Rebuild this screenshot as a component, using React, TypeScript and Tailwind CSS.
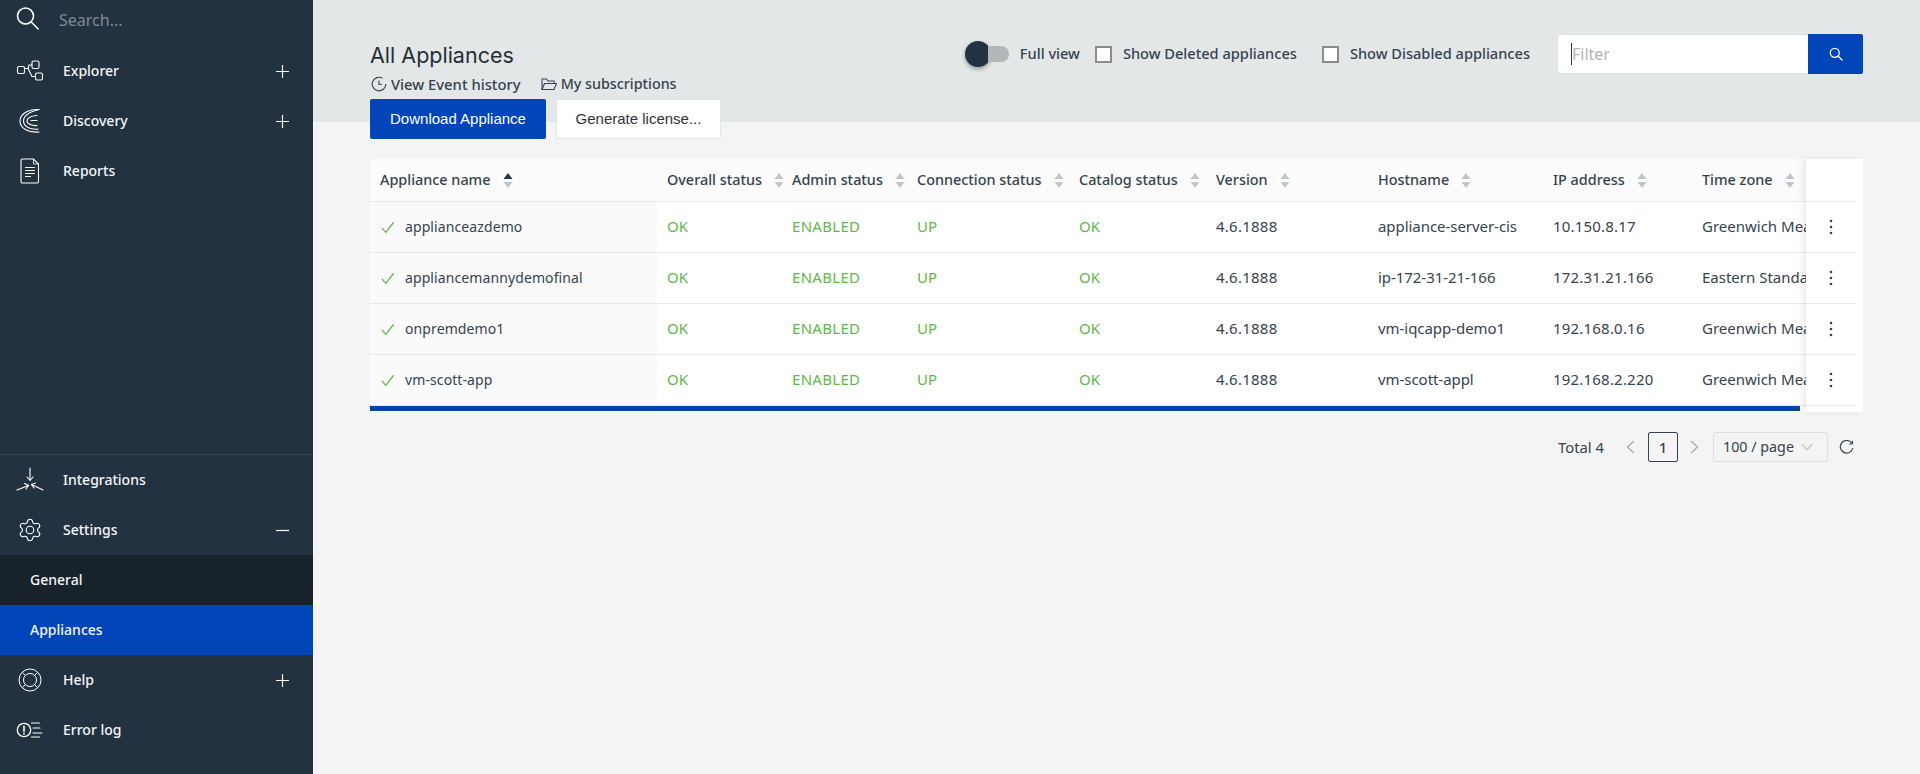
import React from "react";

const font = { fontFamily: '"Noto Sans", "Open Sans", sans-serif' };

function SearchI() {
  return (
    <svg width="26" height="26" viewBox="0 0 26 26" fill="none" stroke="#fff" strokeWidth="1.6" strokeLinecap="round">
      <circle cx="11.5" cy="11" r="8" />
      <path d="M17.2 17l7 7" />
    </svg>
  );
}
function ExplorerI() {
  return (
    <svg width="28" height="22" viewBox="0 0 28 22" fill="none" stroke="#fff" strokeWidth="1.1">
      <rect x="1.5" y="6.5" width="7" height="7" rx="1.5" />
      <rect x="16" y="1" width="7" height="7.5" rx="1.5" />
      <rect x="19.5" y="13" width="7" height="7" rx="1.5" />
      <path d="M8.5 8.5L12 8.5 L13 5 L16 5" />
      <path d="M12 8.5L16 16.5 L19.5 16.5" />
    </svg>
  );
}
function DiscoveryI() {
  return (
    <svg width="24" height="26" viewBox="0 0 24 26" fill="none" stroke="#fff" strokeWidth="1.1" strokeLinecap="round">
      <path d="M21 1.500C10 1 2 6 2 13c0 7 8 12 19 11" />
      <path d="M21 1.500C13 3.500 5.500 7 5.500 13c0 5.500 7 9 14.500 8" />
      <path d="M19 7.500C13 8 9 10 9 13c0 3 5 5 10 4.500" />
      <path d="M19 12.500h-6" />
    </svg>
  );
}
function ReportsI() {
  return (
    <svg width="20" height="26" viewBox="0 0 20 26" fill="none" stroke="#fff" strokeWidth="1.1">
      <path d="M2.5 1h11l5 5v17.5a1.5 1.5 0 0 1-1.5 1.5H2.5A1.5 1.5 0 0 1 1 23.500V2.500A1.500 1.500 0 0 1 2.500 1z" />
      <path d="M13.500 1v5h5" strokeWidth="0.8" />
      <path d="M5 9.500h10M5 12.500h10M5 15.500h10M5 18.500h6" strokeWidth="1.2" />
    </svg>
  );
}
function IntegrationsI() {
  return (
    <svg width="30" height="26" viewBox="0 0 30 26" fill="none" stroke="#fff" strokeWidth="1.1" strokeLinecap="round">
      <path d="M15 1v12M12 10l3 3.500 3-3.500" />
      <path d="M2 23l11.500-4.500M9.500 16.500l4 2-2.500 3.500" />
      <path d="M28 23l-11.500-5.500M20.500 16l-4 1.500 2.500 3.500" />
    </svg>
  );
}
function SettingsI() {
  return (
    <svg width="26" height="26" viewBox="0 0 24 24" fill="none" stroke="#fff" strokeWidth="1" strokeLinejoin="round">
      <path d="M9.671 4.136a2.34 2.34 0 0 1 4.659 0 2.34 2.34 0 0 0 3.319 1.915 2.34 2.34 0 0 1 2.33 4.033 2.34 2.34 0 0 0 0 3.831 2.34 2.34 0 0 1-2.33 4.033 2.34 2.34 0 0 0-3.319 1.915 2.34 2.34 0 0 1-4.659 0 2.34 2.34 0 0 0-3.32-1.915 2.34 2.34 0 0 1-2.33-4.033 2.34 2.34 0 0 0 0-3.831A2.34 2.34 0 0 1 6.350 6.051a2.34 2.34 0 0 0 3.319-1.915" />
      <circle cx="12" cy="12" r="3.500" />
    </svg>
  );
}
function HelpI() {
  return (
    <svg width="24" height="24" viewBox="0 0 24 24" fill="none" stroke="#fff" strokeWidth="1">
      <circle cx="12" cy="12" r="11" />
      <circle cx="12" cy="12" r="6.500" />
      <path d="M4.500 4.500l3 3M19.500 4.500l-3 3M4.500 19.500l3-3M19.500 19.500l-3-3" />
    </svg>
  );
}
function ErrorI() {
  return (
    <svg width="28" height="18" viewBox="0 0 28 18" fill="none" stroke="#fff" strokeWidth="1.1" strokeLinecap="round">
      <circle cx="8" cy="9" r="6.700" strokeWidth="1.300" />
      <path d="M8 5.200v5M8 12.400v.5" strokeWidth="1.600" />
      <path d="M15.500 2h8M17 7h7M17 12h9M15.500 16h8" />
    </svg>
  );
}
function Plus() {
  return (
    <svg width="13" height="13" viewBox="0 0 13 13" stroke="#fff" strokeWidth="1.2">
      <path d="M6.500 0v13M0 6.500h13" />
    </svg>
  );
}
function Minus() {
  return (
    <svg width="13" height="13" viewBox="0 0 13 13" stroke="#fff" strokeWidth="1.2">
      <path d="M0 6.500h13" />
    </svg>
  );
}

function NavRow({ icon, label, sign }: { icon: React.ReactNode; label: string; sign?: "plus" | "minus" }) {
  return (
    <div className="flex h-[50px] items-center">
      <div className="ml-[15px] flex w-[30px] items-center justify-center">{icon}</div>
      <span className="ml-[18px] mb-[1px] text-[14px] leading-[20px] font-medium text-[#f4f6f7]">{label}</span>
      {sign && (
        <span className="ml-auto mr-[24px] flex items-center">{sign === "plus" ? <Plus /> : <Minus />}</span>
      )}
    </div>
  );
}

function Sort({ active }: { active?: boolean }) {
  return (
    <svg width="10" height="15" viewBox="0 0 10 15" className="ml-[12px] shrink-0">
      <path d="M5 0l4.500 6H.5z" fill={active ? "#2b3a47" : "#c2c5c8"} />
      <path d="M5 15l4.500-6H.5z" fill="#c2c5c8" />
    </svg>
  );
}

const rows = [
  ["applianceazdemo", "appliance-server-cis", "10.150.8.17", "Greenwich Mean Time"],
  ["appliancemannydemofinal", "ip-172-31-21-166", "172.31.21.166", "Eastern Standard Time"],
  ["onpremdemo1", "vm-iqcapp-demo1", "192.168.0.16", "Greenwich Mean Time"],
  ["vm-scott-app", "vm-scott-appl", "192.168.2.220", "Greenwich Mean Time"],
];

const cols = "grid grid-cols-[287px_135px_125px_162px_137px_162px_175px_149px_104px]";

function Head({ label, pad, active }: { label: string; pad?: boolean; active?: boolean }) {
  return (
    <div className={`flex items-center overflow-hidden whitespace-nowrap ${pad ? "pl-[10px]" : ""}`}>
      {label}
      <Sort active={active} />
    </div>
  );
}

export default function App() {
  return (
    <div className="flex h-screen w-full overflow-hidden" style={font}>
      <aside className="flex h-full w-[313px] shrink-0 flex-col bg-[#233241]">
        <div className="flex h-[46px] items-center pb-[7px]">
          <div className="ml-[12px] mb-[4px] flex w-[30px] items-center justify-center">
            <SearchI />
          </div>
          <span className="ml-[17px] text-[16px] text-[#818b95]">Search...</span>
        </div>
        <NavRow icon={<ExplorerI />} label="Explorer" sign="plus" />
        <NavRow icon={<DiscoveryI />} label="Discovery" sign="plus" />
        <NavRow icon={<ReportsI />} label="Reports" />
        <div className="mt-auto mb-[19px] border-t border-[#33434f]">
          <NavRow icon={<IntegrationsI />} label="Integrations" />
          <NavRow icon={<SettingsI />} label="Settings" sign="minus" />
          <div className="flex h-[50px] items-center bg-[#18222b] pb-[1px] pl-[30px] text-[14px] leading-[20px] font-medium text-[#f4f6f7]">General</div>
          <div className="flex h-[50px] items-center bg-[#0145b9] pb-[1px] pl-[30px] text-[14px] leading-[20px] font-medium text-[#f4f6f7]">Appliances</div>
          <NavRow icon={<HelpI />} label="Help" sign="plus" />
          <NavRow icon={<ErrorI />} label="Error log" />
        </div>
      </aside>

      <main className="min-w-0 flex-1 bg-[linear-gradient(#e4e7e8_122px,#f4f4f4_122px)] pl-[57px] pr-[57px]">
        <div className="flex justify-between">
          <div className="pt-[41px]">
            <h1 className="text-[21.5px] leading-[28px] font-normal text-[#262f36]" style={{ fontFamily: '"Inter", sans-serif' }}>
              All Appliances
            </h1>
            <div className="mt-[5px] flex h-[20px] items-center text-[14.8px] font-medium text-[#36434d]">
              <svg width="16" height="16" viewBox="0 0 16 16" fill="none" stroke="#36434d" strokeWidth="1.100" className="ml-[1px]">
                <path d="M14.800 8A6.800 6.800 0 1 1 11.500 2.200" />
                <path d="M8 4.500V8.500l3-.2" />
              </svg>
              <span className="ml-[4px] whitespace-nowrap">View Event history</span>
              <svg width="16" height="14" viewBox="0 0 16 14" fill="none" stroke="#36434d" strokeWidth="1.100" className="ml-[20px]">
                <path d="M1 12.500V2h4.500l1.500 2h6v2.500" />
                <path d="M1 12.500L3.500 6.500H15.500L13 12.500z" />
              </svg>
              <span className="ml-[4px] whitespace-nowrap text-[14.3px]">My subscriptions</span>
            </div>
            <div className="mt-[5px] flex gap-[10px]" style={{ fontFamily: '"Liberation Sans", Arial, sans-serif' }}>
              <button className="h-[40px] w-[176px] rounded-[2px] bg-[#0145b9] text-[15px] text-white">Download Appliance</button>
              <button className="h-[40px] w-[165px] rounded-[2px] border border-[#e6e6e6] bg-white text-[15px] text-[#333]">Generate license...</button>
            </div>
          </div>

          <div className="mt-[34px] flex h-[40px] items-center text-[14.6px] font-medium text-[#36434d]">
            <div className="flex items-center">
              <div className="h-[26px] w-[26px] rounded-full bg-[#233241] shadow-[0_2px_4px_rgba(0,0,0,0.35)]" />
              <div className="-ml-[3px] h-[16px] w-[21px] rounded-r-full bg-[#b4b6b8]" />
            </div>
            <span className="ml-[11px] whitespace-nowrap">Full view</span>
            <span className="ml-[15px] h-[17px] w-[17px] border-2 border-[#8c8c8c] bg-white" />
            <span className="ml-[11px] whitespace-nowrap">Show Deleted appliances</span>
            <span className="ml-[25px] h-[17px] w-[17px] border-2 border-[#8c8c8c] bg-white" />
            <span className="ml-[11px] whitespace-nowrap">Show Disabled appliances</span>
            <div className="ml-[27px] flex h-[40px] w-[306px]">
              <div className="flex h-full flex-1 items-center rounded-l-[2px] border border-r-0 border-[#dfe1e2] bg-white pl-[13px]">
                <span className="h-[22px] w-px bg-[#333]" />
                <input placeholder="Filter" className="ml-0 w-full bg-transparent text-[16px] font-normal outline-none placeholder:text-[#b3b3b3]" />
              </div>
              <button className="flex h-full w-[55px] items-center justify-center rounded-r-[2px] bg-[#0145b9]">
                <svg width="14" height="14" viewBox="0 0 14 14" fill="none" stroke="#fff" strokeWidth="1.300" strokeLinecap="round">
                  <circle cx="5.800" cy="5.800" r="4.500" />
                  <path d="M9 9l4 4" />
                </svg>
              </button>
            </div>
          </div>
        </div>

        <div className="mt-[20px] flex h-[253px] bg-white text-[15px] leading-[20px] text-[#36434d]">
          <div className="w-[1436px] shrink-0 overflow-hidden">
            <div className={`${cols} h-[43px] border-b border-[#e9e9e9] bg-[#fbfbfb] text-[14.4px] font-medium`}>
              <Head label="Appliance name" pad active />
              <Head label="Overall status" pad />
              <Head label="Admin status" />
              <Head label="Connection status" />
              <Head label="Catalog status" />
              <Head label="Version" />
              <Head label="Hostname" />
              <Head label="IP address" />
              <Head label="Time zone" />
            </div>
            {rows.map((r) => (
              <div key={r[0]} className={`${cols} h-[51px] items-stretch border-b border-[#e9e9e9] last:border-b-0`}>
                <div className="flex items-center bg-[#fafafa] pl-[10px]">
                  <svg width="14" height="13" viewBox="0 0 16 14" fill="none" stroke="#5fb548" strokeWidth="1.400" className="ml-[1px]">
                    <path d="M1 7.500l4.500 5L14.500 1" />
                  </svg>
                  <span className="ml-[10px] whitespace-nowrap text-[14px] tracking-[0.1px]">{r[0]}</span>
                </div>
                <div className="flex items-center pb-[2px] pl-[10px] text-[#61b84a]">OK</div>
                <div className="flex items-center pb-[2px] tracking-[0.3px] text-[#61b84a]">ENABLED</div>
                <div className="flex items-center pb-[2px] text-[#61b84a]">UP</div>
                <div className="flex items-center pb-[2px] text-[#61b84a]">OK</div>
                <div className="flex items-center pb-[2px] tracking-[0.25px]">4.6.1888</div>
                <div className="flex items-center whitespace-nowrap pb-[2px] tracking-[-0.05px]">{r[1]}</div>
                <div className="flex items-center pb-[2px] tracking-[0.2px]">{r[2]}</div>
                <div className="flex items-center overflow-hidden whitespace-nowrap pb-[2px]">{r[3]}</div>
              </div>
            ))}
            <div className="h-[5px] w-[1430px] bg-[#0444a8]" />
          </div>
          <div className="relative z-10 flex-1 bg-white shadow-[-4px_0_6px_rgba(0,0,0,0.07)]">
            <div className="h-[43px] w-[50px] border-b border-[#e9e9e9]" />
            {rows.map((r) => (
              <div key={r[0]} className="flex h-[51px] w-[50px] items-center justify-center border-b border-[#e9e9e9]">
                <svg width="4" height="16" viewBox="0 0 4 16" fill="#36434d">
                  <circle cx="2" cy="2" r="1.300" />
                  <circle cx="2" cy="8" r="1.300" />
                  <circle cx="2" cy="14" r="1.300" />
                </svg>
              </div>
            ))}
          </div>
        </div>

        <div className="mt-[20px] flex h-[30px] items-center justify-end text-[14.8px] text-[#36434d]">
          <span>Total 4</span>
          <svg width="9" height="14" viewBox="0 0 9 14" fill="none" stroke="#a8a8a8" strokeWidth="1.200" className="ml-[22px]">
            <path d="M8 1L1.500 7 8 13" />
          </svg>
          <span className="ml-[13px] flex h-[30px] w-[30px] items-center justify-center rounded-[2px] border border-[#36434d] font-medium">1</span>
          <svg width="9" height="14" viewBox="0 0 9 14" fill="none" stroke="#a8a8a8" strokeWidth="1.200" className="ml-[12px]">
            <path d="M1 1l6.500 6L1 13" />
          </svg>
          <div className="ml-[14px] flex h-[30px] w-[115px] items-center rounded-[2px] border border-[#dedede] pl-[9px] text-[14.3px]">
            <span className="whitespace-nowrap">100 / page</span>
            <svg width="12" height="8" viewBox="0 0 12 8" fill="none" stroke="#a8a8a8" strokeWidth="1" className="ml-[7px]">
              <path d="M1 1l5 6 5-6" />
            </svg>
          </div>
          <svg width="15" height="15" viewBox="0 0 15 15" fill="none" stroke="#36434d" strokeWidth="1.200" className="ml-[11px] mr-[9px]">
            <path d="M13 3.500A6.300 6.300 0 1 0 13.800 8" />
            <path d="M13.500 .8V4H10.300" strokeWidth="1" />
          </svg>
        </div>
      </main>
    </div>
  );
}
